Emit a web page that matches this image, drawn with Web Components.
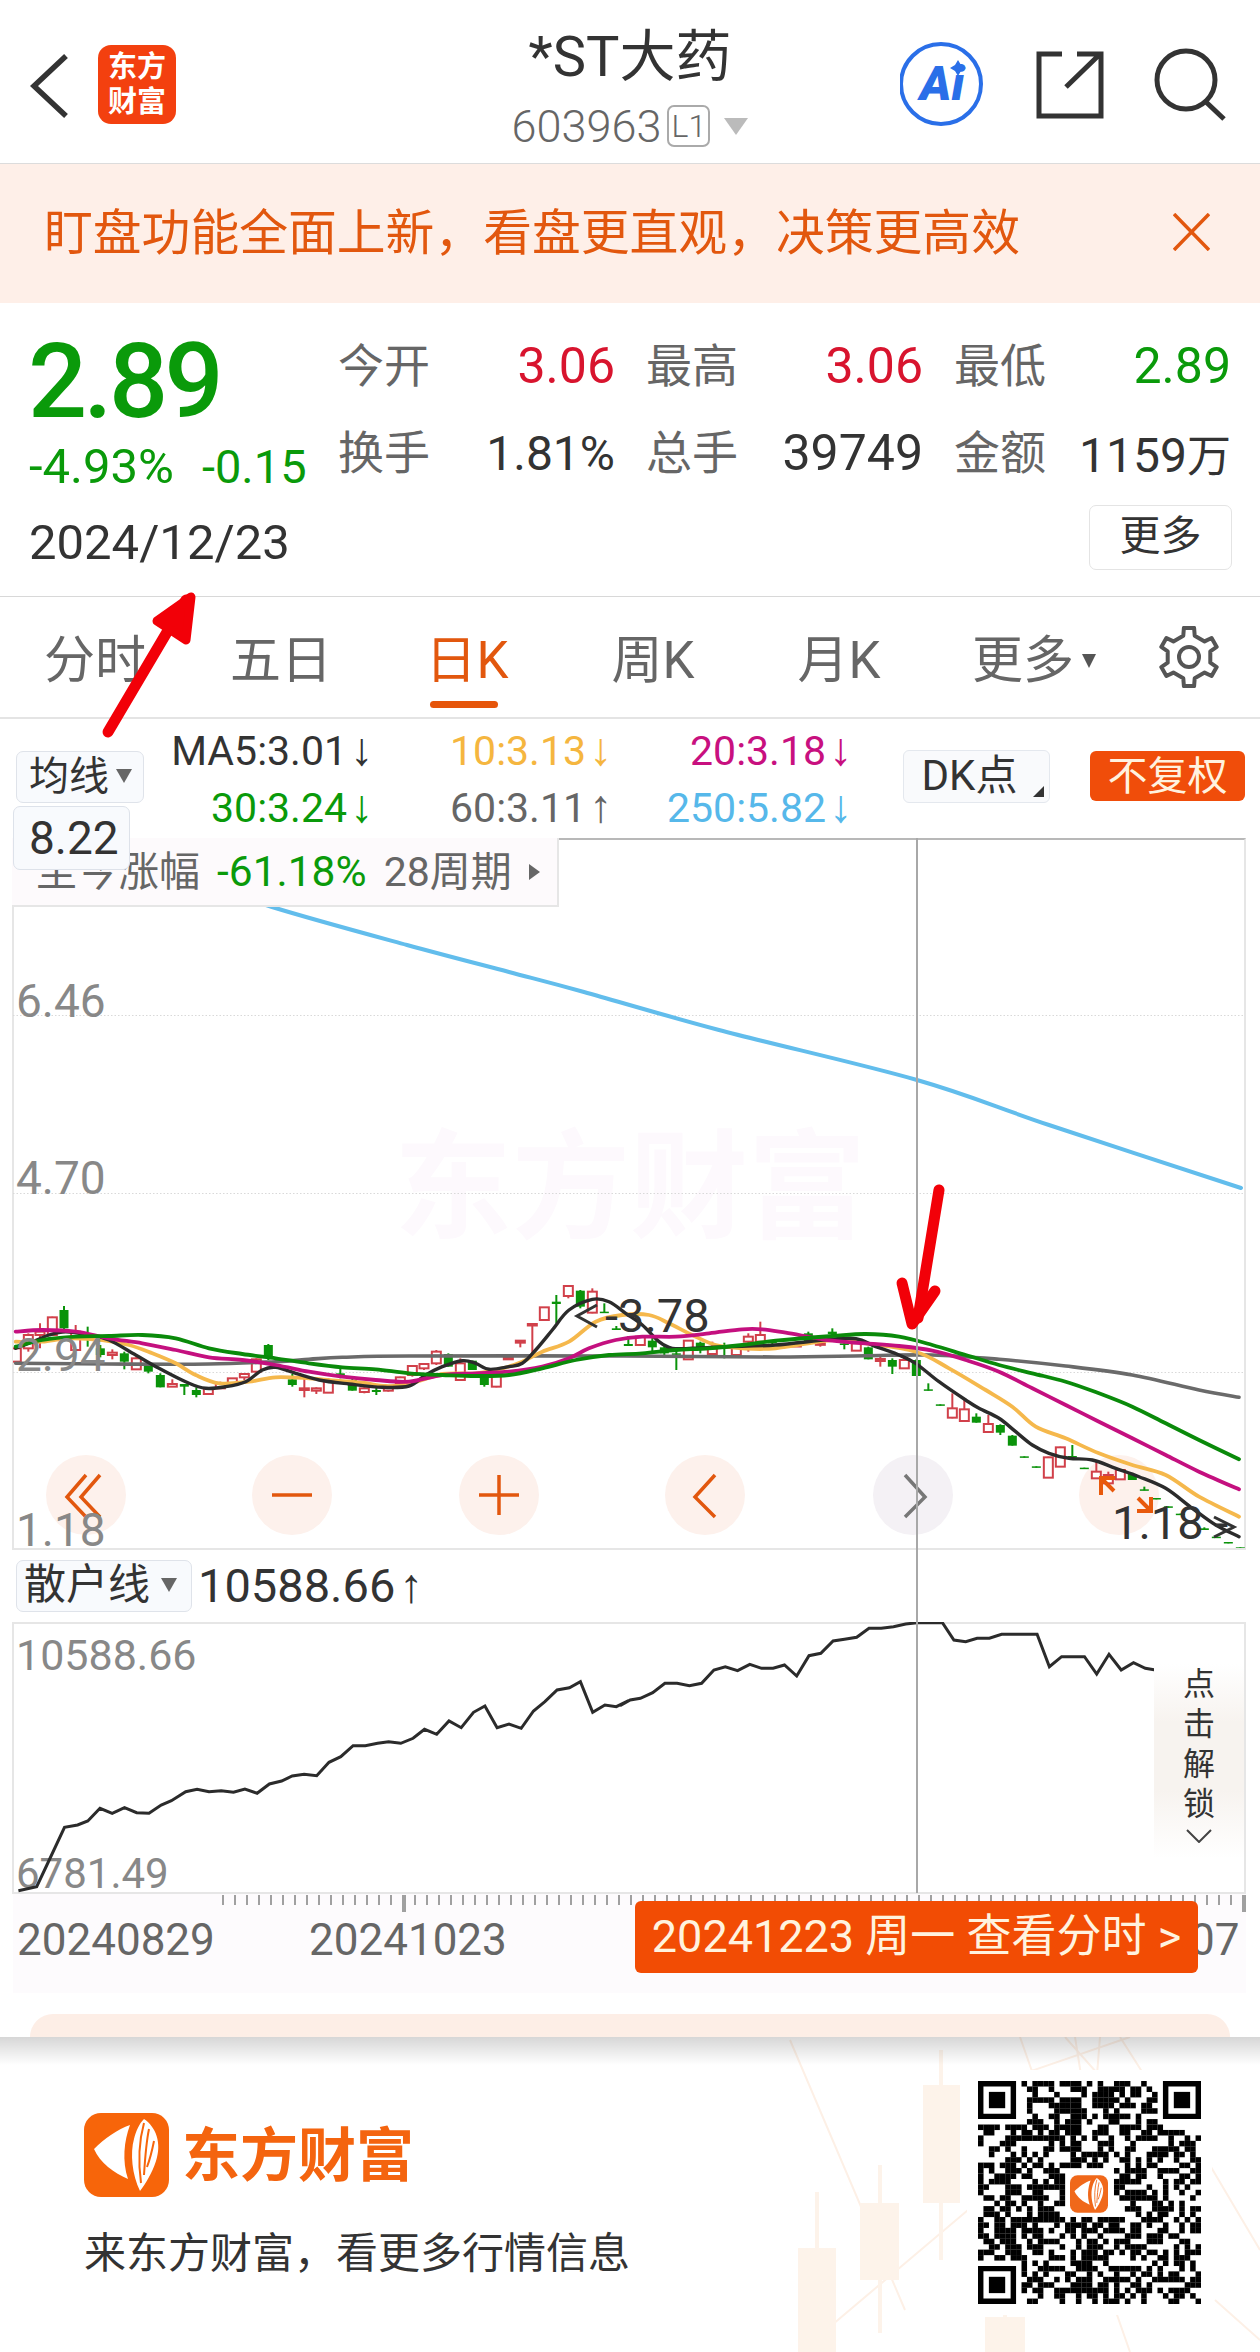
<!DOCTYPE html>
<html lang="zh"><head><meta charset="utf-8"><title>*ST大药</title>
<style>
html,body{margin:0;padding:0;background:#fff}
body{width:1260px;height:2352px;overflow:hidden;position:relative;display:flex;flex-direction:column;font-family:Roboto,"Noto Sans CJK SC",sans-serif;color:#333}
</style></head><body>
<app-header></app-header>
<notice-banner>盯盘功能全面上新，看盘更直观，决策更高效</notice-banner>
<quote-panel></quote-panel>
<period-tabs></period-tabs>
<ma-legend></ma-legend>
<kline-chart></kline-chart>
<sub-header></sub-header>
<sub-chart></sub-chart>
<time-axis></time-axis>
<peach-card></peach-card>
<app-footer></app-footer>
<over-marks></over-marks>
<script>
const FONT='Roboto,"Noto Sans CJK SC",sans-serif';
class Base extends HTMLElement{
  connectedCallback(){ if(!this.shadowRoot){this.attachShadow({mode:'open'}).innerHTML=this.html();} }
}
function wing(w,h,bg){return `<svg width="${w}" height="${h}" viewBox="0 0 85 84" style="display:block"><rect width="85" height="84" rx="17" fill="${bg}"/>
<path d="M10 36C20 26 34 16 46 12C40 28 38 48 44 66C30 60 16 50 10 36Z" fill="#fff"/>
<path d="M60 6C72 14 78 30 72 48C68 60 62 70 56 78C48 62 46 40 50 26C52 18 55 11 60 6Z" fill="#fff"/>
<path d="M60 10C55 28 54 48 57 70M65 16C62 30 61 46 60 62M70 28C68 38 66 46 63 54" stroke="${bg}" stroke-width="2" fill="none"/></svg>`}

customElements.define('app-header',class extends Base{html(){return `<style>
:host{display:grid;grid-template-columns:1fr auto 1fr;height:163px;border-bottom:1px solid #dcdcdc;box-sizing:content-box;flex:none;font-family:${FONT}}
.l{display:flex;align-items:flex-start;padding:45px 0 0 30px}
.logo{margin-left:28px;width:78px;height:79px;border-radius:13px;background:#f3400f;color:#fff;font-weight:700;font-size:29px;line-height:35px;text-align:center;padding-top:5px;box-sizing:border-box;letter-spacing:0}
.c{text-align:center;padding-top:26px}
.t{font-size:56px;line-height:62px;color:#333}
.s{display:flex;align-items:center;justify-content:center;height:52px;margin-top:12px;color:#666;font-size:45px;font-weight:300}
.b{font-size:32px;line-height:38px;border:2px solid #aaa;border-radius:7px;width:43px;height:42px;box-sizing:border-box;text-align:center;margin:0 14px 0 6px}
.tri{width:0;height:0;border:12px solid transparent;border-top:17px solid #bbb;border-bottom:0}
.r{position:relative}
.r svg{position:absolute;right:0;top:0}
.ai{position:absolute;right:278px;top:44px;width:80px;text-align:center;color:#2a6fe8;font-weight:900;font-style:italic;font-size:48px;line-height:80px}
</style>
<div class="l"><svg width="40" height="66" viewBox="0 0 40 66" style="margin-top:8px"><path d="M36 3L4 33L36 63" fill="none" stroke="#333" stroke-width="5.5"/></svg><div class="logo">东方<br>财富</div></div>
<div class="c"><div class="t">*ST大药</div><div class="s"><span>603963</span><span class="b">L1</span><span class="tri"></span></div></div>
<div class="r"><svg width="360" height="163" viewBox="900 0 360 163">
<circle cx="941" cy="84" r="40" fill="#fff" stroke="#2a6fe8" stroke-width="4"/>
<path d="M1062 54H1039V116H1101V68M1066 87L1098 56M1077 54H1101V68" fill="none" stroke="#333" stroke-width="5"/>
<circle cx="1186" cy="80" r="29" fill="none" stroke="#333" stroke-width="5"/><path d="M1206 102L1224 119" stroke="#333" stroke-width="5"/>
</svg><span class="ai">Ai</span></div>`}});

customElements.define('notice-banner',class extends Base{html(){return `<style>
:host{display:flex;align-items:center;justify-content:space-between;height:139px;flex:none;background:#feefe8;padding:0 50px 0 44px;color:#e2570e;font:400 48.8px/1 ${FONT}}
span{margin-top:1px}
svg{display:block;margin-top:-3px}
</style><span><slot></slot></span><svg width="37" height="38" viewBox="0 0 37 38"><path d="M1 1L36 37M36 1L1 37" stroke="#e2570e" stroke-width="3.5" fill="none"/></svg>`}});

customElements.define('quote-panel',class extends Base{html(){
 const G='#0a9a0a',R='#d8142e',K='#333';
 const cell=(l,v,c,f)=>`<div class="cell"><span class="lb">${l}</span><span class="v" style="color:${c}${f?';font-size:'+f+'px':''}">${v}</span></div>`;
 return `<style>
:host{display:grid;grid-template-columns:308px 1fr;height:294px;flex:none;padding-left:30px;box-sizing:border-box;border-bottom:1px solid #d8d8d8;font-family:${FONT}}
.p{font-size:104px;line-height:104px;font-weight:500;color:${G};margin-top:27px;letter-spacing:-3.5px;margin-left:-2px}
.d{display:flex;gap:28px;color:${G};font-size:47px;line-height:54px;font-weight:400;margin-top:6px;white-space:nowrap;margin-left:-1px}
.d .pc{font-size:49px}
.dt{font-size:49px;line-height:56px;font-weight:400;color:#333;margin-top:21px;white-space:nowrap;margin-left:-1px}
.g{display:grid;grid-template-columns:277px 277px 277px;column-gap:31px;row-gap:29px;margin-top:34px}
.cell{display:flex;justify-content:space-between;align-items:center;height:58px}
.lb{color:#666;font-size:46px;position:relative;top:-4px}
.v{font-size:50px;font-weight:400;white-space:nowrap}
.v small{font-size:44px}
.m{position:absolute;right:28px;top:505px;width:143px;height:65px;box-sizing:border-box;border:1px solid #e4e4e4;border-radius:7px;text-align:center;font-size:41px;line-height:61px;color:#333;background:#fff}
</style>
<div><div class="p">2.89</div><div class="d"><span class="pc">-4.93%</span><span>-0.15</span></div><div class="dt">2024/12/23</div></div>
<div><div class="g">${cell('今开','3.06',R)}${cell('最高','3.06',R)}${cell('最低','2.89',G)}${cell('换手','1.81%',K,48)}${cell('总手','39749',K)}${cell('金额','1159<small>万</small>',K,48)}</div></div>
<div class="m">更多</div>`}});

customElements.define('period-tabs',class extends Base{html(){
 let pts=[];for(let k=0;k<6;k++){const a=k*60-90;[[-15,22],[-10,29.5],[10,29.5],[15,22]].forEach(([d,r])=>{const t=(a+d)*Math.PI/180;pts.push((30+r*Math.cos(t)).toFixed(1)+','+(31+r*Math.sin(t)).toFixed(1))})}
 return `<style>
:host{display:flex;align-items:center;height:122px;flex:none;border-bottom:2px solid #e4e4e4;box-sizing:border-box;padding-left:2px;font:400 51px/1 ${FONT};color:#666}
.t{width:186px;text-align:center;position:relative;height:120px;line-height:127px;display:block;white-space:nowrap}
.on{color:#e2570e}
.on::after{content:"";position:absolute;left:56px;width:68px;height:7px;top:104px;background:#e6550a;border-radius:4px}
.tri{display:inline-block;width:0;height:0;border:7px solid transparent;border-top:14px solid #555;border-bottom:0;margin-left:8px;vertical-align:10px}
svg{margin-left:81px;flex:none;margin-top:-1px}
</style>
<span class="t">分时</span><span class="t">五日</span><span class="t on">日K</span><span class="t">周K</span><span class="t">月K</span><span class="t" style="width:146px;text-align:left;padding-left:40px;box-sizing:border-box">更多<i class="tri"></i></span>
<svg width="60" height="62" viewBox="0 0 60 62"><polygon points="${pts.join(' ')}" fill="none" stroke="#555" stroke-width="4" stroke-linejoin="round"/><circle cx="30" cy="31" r="10" fill="none" stroke="#555" stroke-width="4"/></svg>`}});

customElements.define('ma-legend',class extends Base{html(){
 const it=(t,c,u)=>`<span style="color:${c}">${t}<i>${u?'↑':'↓'}</i></span>`;
 return `<style>
:host{display:flex;align-items:flex-start;height:119px;flex:none;padding-left:16px;box-sizing:border-box;font:400 41px/57px ${FONT}}
.bx{margin-top:32px;width:128px;height:52px;box-sizing:border-box;border:1px solid #dfe3ea;border-radius:7px;background:#f8fafd;color:#333;font-size:40px;line-height:50px;padding-left:12px;white-space:nowrap}
.tr{display:inline-block;width:0;height:0;border:8px solid transparent;border-top:14px solid #666;border-bottom:0;margin-left:7px;vertical-align:7px}
.g{display:grid;grid-template-columns:229px 239px 240px;grid-auto-rows:57px;margin-top:4px;justify-items:end;font-weight:400;white-space:nowrap}
i{font:400 46px/0 "Liberation Sans",sans-serif;margin-left:3px;font-style:normal}
.dk{margin:31px 0 0 51px;width:147px;height:53px;box-sizing:border-box;border:1px solid #e4e8ee;border-radius:6px;background:#f9fafc;font-size:42px;line-height:50px;text-align:center;color:#333;position:relative;padding-right:14px}
.dk::after{content:"";position:absolute;right:5px;bottom:5px;border-left:11px solid transparent;border-bottom:11px solid #333}
.fq{margin:32px 0 0 40px;width:155px;height:50px;border-radius:6px;background:#f04d0a;color:#fff2df;font-size:40px;line-height:52px;text-align:center}
</style>
<div class="bx">均线<span class="tr"></span></div>
<div class="g">${it('MA5:3.01','#333')}${it('10:3.13','#f5b63f')}${it('20:3.18','#c8107f')}${it('30:3.24','#0a9a0a')}${it('60:3.11','#666',1)}${it('250:5.82','#56b8ea')}</div>
<div class="dk">DK点</div><div class="fq">不复权</div>`}});

function smooth(p){let d=`M${p[0][0].toFixed(1)} ${p[0][1].toFixed(1)}`;for(let i=0;i<p.length-1;i++){const a=p[i-1]||p[i],b=p[i],c=p[i+1],e=p[i+2]||c;d+=`C${(b[0]+(c[0]-a[0])/6).toFixed(1)} ${(b[1]+(c[1]-a[1])/6).toFixed(1)} ${(c[0]-(e[0]-b[0])/6).toFixed(1)} ${(c[1]-(e[1]-b[1])/6).toFixed(1)} ${c[0].toFixed(1)} ${c[1].toFixed(1)}`}return d}
const z9=a=>a.map(([x,y])=>[10+x/3,1280+y/3]),z10=a=>a.map(([x,y])=>[410+x/3,1270+y/3]),z11=a=>a.map(([x,y])=>[800+x/3,1310+y/3]);
const MA={
 gray:[...z9([[20,250],[300,252],[600,252],[800,245],[900,238],[1000,232],[1200,228]]),...z10([[600,258],[1100,261]]),...z11([[200,137],[400,135],[600,148],[800,168],[1000,195],[1200,240],[1320,262]])],
 orange:[...z9([[20,185],[100,185],[180,175],[280,180],[360,195],[430,220],[500,250],[560,285],[630,310],[720,305],[800,292],[900,295],[980,302],[1060,308],[1130,318],[1200,312]]),...z10([[100,312],[200,310],[280,295],[340,275],[400,245],[480,215],[560,155],[640,135],[720,135],[780,160],[850,195],[920,225],[1000,235],[1100,235]]),...z11([[100,90],[200,100],[350,125],[450,175],[560,240],[640,290],[710,350],[800,385],[900,430],[1000,465],[1100,495],[1200,560],[1320,620]])],
 black:[...z9([[20,205],[60,190],[120,165],[170,155],[240,165],[300,180],[380,225],[450,265],[540,310],[590,325],[650,320],[710,305],[760,270],[800,262],[860,280],[930,300],[1020,312],[1120,322],[1200,318]]),...z10([[50,315],[100,290],[160,272],[200,280],[240,298],[300,290],[340,280],[380,240],[430,180],[480,120],[550,88],[600,95],[650,130],[700,165],[750,215],[790,235],[850,235],[950,230],[1100,225]]),...z11([[150,85],[230,110],[300,135],[350,160],[420,215],[500,270],[540,295],[600,325],[650,365],[700,405],[750,430],[810,445],[880,450],[950,475],[1020,500],[1100,535],[1180,595],[1250,645],[1320,680]])],
 mag:[...z9([[20,155],[100,150],[200,155],[300,175],[400,190],[500,210],[600,232],[700,240],[800,255],[900,275],[1000,290],[1100,300],[1200,305]]),...z10([[100,315],[200,310],[300,305],[400,290],[480,265],[540,235],[620,210],[700,200],[800,200],[900,190],[1000,178],[1060,178],[1130,188]]),...z11([[100,92],[200,100],[300,108],[400,122],[500,150],[600,185],[700,235],[800,285],[900,335],[1000,385],[1100,435],[1200,485],[1320,538]])],
 green:[...z9([[20,200],[100,180],[200,170],[300,168],[400,165],[500,175],[600,205],[700,222],[800,235],[900,250],[1000,262],[1100,268],[1200,280]]),...z10([[100,315],[200,318],[300,315],[400,295],[500,270],[600,255],[700,250],[800,240],[900,235],[1000,225],[1100,212]]),...z11([[100,78],[200,72],[300,80],[400,105],[500,135],[600,165],[700,190],[800,215],[900,250],[1000,290],[1100,340],[1200,390],[1320,448]])]
};
const C9=`22 205 205 245 250 r,58 160 165 205 215 r,93 130 155 165 205 r,130 110 112 165 165 r,165 78 90 145 155 g,200 135 155 210 210 r,236 140 160 170 200 g,274 195 205 225 232 g,310 208 218 225 238 r,346 215 220 245 268 g,382 230 235 268 268 r,418 250 255 275 280 g,454 280 285 322 322 g,490 298 312 320 320 r,526 312 312 320 345 g,562 322 330 345 352 g,598 325 325 342 342 r,634 305 310 325 325 r,670 295 295 310 310 r,706 282 282 292 300 r,742 235 238 275 280 r,778 192 195 230 240 g,850 282 298 315 320 g,886 290 325 330 352 r,922 322 325 332 342 r,958 295 300 338 338 r,994 265 280 285 295 g,1030 295 300 332 332 g,1066 322 325 336 340 r,1102 322 330 336 345 g,1138 318 320 332 335 r,1174 290 292 310 310 r`;
const C10=`10 285 288 315 320 r,45 280 282 295 300 r,82 240 245 280 285 r,118 250 252 290 290 g,154 265 280 330 332 r,190 272 272 300 300 g,226 318 322 345 350 g,262 305 308 350 352 r,298 255 262 268 268 r,334 210 212 218 232 r,370 162 162 165 255 r,406 112 112 150 150 r,442 75 95 102 160 g,478 48 48 78 85 r,514 60 62 110 115 g,550 55 65 128 130 r,586 100 125 128 128 g,622 168 175 180 180 g,658 198 222 228 228 g,694 195 200 225 225 r,730 200 212 232 245 g,766 228 232 250 255 g,802 235 250 252 300 g,838 210 212 268 270 r,874 215 218 240 250 g,910 215 235 252 255 r,946 218 232 236 265 g,982 228 230 255 258 r,1018 190 200 215 245 r,1054 155 195 215 215 r,1090 210 215 220 240 g,1126 220 225 230 235 r,1162 215 225 228 228 r,1198 185 190 215 215 g`;
const C11=`64 90 100 102 110 r,100 55 65 72 78 g,136 95 100 105 118 g,172 85 100 122 122 r,208 110 112 148 148 g,244 140 147 153 170 r,280 145 150 170 192 g,316 135 150 175 175 r,352 148 150 198 198 g,388 220 238 242 242 g,424 283 283 287 287 g,460 250 295 323 325 r,496 270 298 333 333 r,532 310 320 338 338 g,568 315 342 366 366 r,604 343 345 368 375 g,640 375 377 407 407 g,676 439 439 443 443 g,712 469 469 473 473 g,748 440 442 503 503 r,784 410 412 470 470 r,820 405 438 441 441 g,856 473 473 477 477 g,892 450 485 505 505 r,928 485 495 520 520 r,964 478 480 508 508 r,1000 490 492 510 510 g,1036 530 538 541 541 g,1072 564 564 568 568 g,1108 589 589 593 593 g,1144 611 611 615 615 g,1180 636 636 640 640 g,1216 652 655 660 660 g,1252 678 680 683 683 g,1288 696 696 700 700 g,1324 712 712 715 715 g`;
function candles(s,ox,oy){return s.split(',').map(r=>{const a=r.split(' '),[x,wt,bt,bb,wb]=a.slice(0,5).map(Number),c=a[5];const X=(ox+x/3),W=oy+wt/3,T=oy+bt/3,B=oy+bb/3,Y=oy+wb/3;
 const col=c==='r'?'#d1404a':'#0a930a';
 let o=`<path d="M${X} ${W}V${Y}" stroke="${col}" stroke-width="2"/>`;
 o+=c==='r'?`<rect x="${X-4.5}" y="${T}" width="9" height="${Math.max(B-T,1.5)}" fill="#fff" stroke="${col}" stroke-width="2"/>`:`<rect x="${X-4.5}" y="${T}" width="9" height="${Math.max(B-T,1.5)}" fill="${col}"/>`;return o}).join('')}

customElements.define('kline-chart',class extends Base{html(){
 const btns=['M0 -20L-19 2L0 22M14 -20L-5 2L14 22','M-20 0H20','M-20 0H20M0 -20V20','M10 -20L-10 2L10 22','M-8 -20L12 2L-8 22',''];
 const cx=[87,293,500,706,914,1120];
 const b=btns.map((d,i)=>`<circle cx="${cx[i]}" cy="1495" r="40" fill="${i==4?'#f4f1f5':'#fdf1ec'}"/>${d?`<path transform="translate(${cx[i]} 1495)" d="${d}" fill="none" stroke="${i==4?'#777':'#e2570e'}" stroke-width="3.5"/>`:''}`).join('');
 const ln=(p,c,w)=>`<path d="${smooth(p)}" fill="none" stroke="${c}" stroke-width="${w||3}" stroke-linejoin="round" stroke-linecap="round"/>`;
 const blue=[[180,875],[273,907],[408,945],[510,972],[585,992],[720,1030],[918,1080],[1050,1125],[1242,1188]];
 return `<style>
:host{display:block;position:relative;height:712px;flex:none;margin:0 14px 0 12px;box-sizing:border-box;border:solid #e6e6e6;border-width:0 2px 2px 2px;border-top:2px solid #b8b8b8;font-family:${FONT}}
svg{position:absolute;left:-2px;top:-2px;overflow:visible}
.w{position:absolute;left:380px;top:284px;font-size:118px;font-weight:700;color:#fdf9fd;white-space:nowrap;line-height:130px}
.y{position:absolute;left:2px;font-size:46px;line-height:50px;color:#888;font-weight:400}
.sm{position:absolute;left:-2px;top:-2px;width:547px;height:69px;box-sizing:border-box;background:#fdfafc;border:solid #e6e6e6;border-width:0 2px 2px 0;font-size:41px;line-height:64px;color:#666;padding-left:24px;white-space:nowrap;display:flex;align-items:center}
.sm b{font-weight:400;color:#0a9a0a;margin:0 17px 0 17px;font-size:42.5px}
.sm i{display:inline-block;border:8px solid transparent;border-left:11px solid #666;border-right:0;margin-left:17px}
.px{position:absolute;left:-1px;top:-34px;width:117px;height:64px;box-sizing:border-box;background:#f8fafd;border:1px solid #dde2ea;border-radius:7px;font-size:46px;line-height:62px;font-weight:400;color:#333;padding-left:15px}
.t{position:absolute;font-size:47px;line-height:50px;color:#333;font-weight:400;white-space:nowrap}
</style>
<div class="w">东方财富</div>
<svg width="1233" height="712" viewBox="13 838 1233 712">
<defs><clipPath id="c"><rect x="14" y="838" width="1232" height="710"/></clipPath></defs>
<g stroke="#d9d9d9" stroke-width="1" stroke-dasharray="1.5 2"><path d="M14 1015.5H1246M14 1193.5H1246M14 1372.5H1246"/></g>
<g clip-path="url(#c)">
${b}
${ln(blue,'#62bdec',4)}
${candles(C9,10,1280)}${candles(C10,410,1270)}${candles(C11,800,1310)}
${ln(MA.gray,'#6a6a6a',3.6)}${ln(MA.orange,'#f5b84c',3.8)}${ln(MA.black,'#2b2b2b',3.4)}${ln(MA.mag,'#c4107f',3.8)}${ln(MA.green,'#0a8a0a',3.8)}
<path d="M598 1305L578 1316L598 1327M1215 1517L1235 1527L1215 1537" fill="none" stroke="#333" stroke-width="3"/>
<path d="M1102 1495V1478H1116M1102 1478L1115 1491M1138 1511H1152V1497M1152 1511L1139 1498" fill="none" stroke="#e8590c" stroke-width="4" />
</g></svg>
<div class="y" style="top:136px">6.46</div><div class="y" style="top:313px">4.70</div><div class="y" style="top:490px">2.94</div><div class="y" style="top:665px">1.18</div>
<div class="t" style="left:591px;top:451px">-3.78</div>
<div class="t" style="left:1098px;top:658px">1.18 -</div>
<div class="sm">至今涨幅<b>-61.18%</b>28周期<i></i></div>
<div class="px">8.22</div>`}});

customElements.define('sub-header',class extends Base{html(){return `<style>
:host{display:flex;align-items:flex-start;height:72px;flex:none;padding:10px 0 0 16px;box-sizing:border-box;font:400 47px/52px ${FONT};color:#333}
.b{width:176px;height:52px;box-sizing:border-box;border:1px solid #dfe3ea;border-radius:7px;background:#f8fafd;font-size:42px;line-height:48px;padding-left:7px;white-space:nowrap}
.tr{display:inline-block;width:0;height:0;border:8px solid transparent;border-top:14px solid #666;border-bottom:0;margin-left:11px;vertical-align:7px}
.v{margin-left:6px;font-weight:400;white-space:nowrap}
i{font:400 48px/0 "Liberation Sans",sans-serif;margin-left:4px;font-style:normal}
</style><div class="b">散户线<span class="tr"></span></div><div class="v">10588.66<i>↑</i></div>`}});

customElements.define('sub-chart',class extends Base{html(){
 const a=[[45,1052],[90,1040],[115,975],[158,862],[190,855],[215,843],[245,805],[275,820],[305,803],[335,818],[365,820],[395,795],[420,782],[455,755],[483,748],[512,755],[542,752],[572,757],[600,747],[630,760],[660,732],[690,723],[716,708],[745,703],[776,707],[806,667],[835,650],[865,617],[895,617],[925,610],[952,605],[982,610],[1012,595],[1040,568],[1070,583],[1100,543],[1130,563],[1160,517],[1188,498],[1218,563],[1247,552],[1277,565],[1307,513],[1335,485],[1365,450],[1395,443],[1422,425],[1452,517],[1482,495],[1510,500],[1540,482]].map(([x,y])=>[x/2.45,1540+y/3]);
 const b=[[0,497],[25,480],[50,475],[80,458],[110,430],[140,430],[170,437],[200,430],[230,390],[258,380],[288,392],[318,373],[347,385],[375,385],[403,375],[433,408],[463,347],[492,340],[522,303],[550,298],[580,292],[610,265],[640,265],[670,260],[700,252],[728,248],[790,248],[818,300],[847,305],[875,295],[905,295],[935,283],[1022,283],[1052,380],[1082,350],[1138,350],[1168,402],[1198,343],[1228,390],[1258,368],[1287,385],[1312,390]].map(([x,y])=>[620+x/2.45,1540+y/3]);
 const d=[...a,...b].map(([x,y],i)=>(i?'L':'M')+x.toFixed(1)+' '+y.toFixed(1)).join('');
 return `<style>
:host{display:block;position:relative;height:272px;flex:none;margin:0 14px 0 12px;box-sizing:border-box;border:2px solid #e6e6e6;font-family:${FONT}}
svg{position:absolute;left:-2px;top:-2px}
.y{position:absolute;left:2px;font-size:43px;line-height:50px;color:#888;font-weight:400}
.lock{position:absolute;right:0;top:40px;width:90px;height:194px;background:linear-gradient(#fff,#f7f3ef 30%,#f7f3ef 65%,#fff);text-align:center;font-size:32px;line-height:40px;color:#333}
.lock div{height:40px}
.lock svg{position:static;display:block;margin:5px auto 0}
</style>
<div class="y" style="top:6px">10588.66</div><div class="y" style="top:230px;line-height:40px;font-size:42px">6781.49</div>
<svg width="1234" height="272" viewBox="12 1622 1234 272"><path d="${d}" fill="none" stroke="#2b2b2b" stroke-width="3" stroke-linejoin="miter"/></svg>
<div class="lock"><div>点</div><div>击</div><div>解</div><div>锁</div><svg width="28" height="14" viewBox="0 0 28 14"><path d="M2 1L14 13L26 1" fill="none" stroke="#444" stroke-width="2"/></svg></div>`}});

customElements.define('time-axis',class extends Base{html(){
 let t='';for(let x=222;x<=1242;x+=12){const big=(x===402||x===1242);t+=`<rect x="${x-13}" y="1" width="${big?4:2}" height="${big?17:10}" fill="#a0a0a0"/>`}
 return `<style>
:host{display:block;position:relative;height:99px;flex:none;margin:0 14px 0 13px;background:#fdfbfd;font-family:${FONT};font-size:44px;color:#666;font-weight:400}
svg{position:absolute;left:0;top:0}
span{position:absolute;top:21px;line-height:50px;white-space:nowrap}
.o{position:absolute;left:622px;top:7px;width:563px;height:72px;background:#f24c04;border-radius:6px;color:#fff3df;font-size:45px;line-height:72px;text-align:center;font-weight:400;white-space:nowrap}
</style>
<svg width="1233" height="30">${t}</svg>
<span style="left:4px">20240829</span><span style="left:296px">20241023</span><span style="left:1177px">07</span>
<div class="o">20241223 周一 查看分时 &gt;</div>`}});

customElements.define('peach-card',class extends Base{html(){return `<style>
:host{display:block;height:23px;flex:none;margin:21px 30px 0 30px;background:#fdeee6;border-radius:30px 30px 0 0}
</style>`}});

customElements.define('app-footer',class extends Base{html(){
 let s=12345;const rnd=()=>(s=(s*1103515245+12345)&0x7fffffff)/0x7fffffff;
 const n=41,m=223/n;let q='';
 const fin=(x,y)=>x<8&&y<8||x>=n-8&&y<8||x<8&&y>=n-8;
 for(let y=0;y<n;y++)for(let x=0;x<n;x++){ if(fin(x,y))continue; if(x>=16&&x<=24&&y>=16&&y<=24)continue; if(rnd()>.5||((x+y)%5==0&&rnd()>.5))q+=`<rect x="${(x*m).toFixed(2)}" y="${(y*m).toFixed(2)}" width="${(m+.1).toFixed(2)}" height="${(m+.1).toFixed(2)}"/>`}
 const fp=(x,y)=>`<path fill-rule="evenodd" d="M${x} ${y}h${7*m}v${7*m}h${-7*m}zM${x+m} ${y+m}v${5*m}h${5*m}v${-5*m}z"/><rect x="${x+2*m}" y="${y+2*m}" width="${3*m}" height="${3*m}"/>`;
 return `<style>
:host{display:block;position:relative;height:315px;flex:none;background:#fff;overflow:hidden;font-family:${FONT}}
.bg{position:absolute;left:0;top:0}
.sh{position:absolute;left:0;right:0;top:0;height:28px;background:linear-gradient(rgba(0,0,0,.16),rgba(0,0,0,0))}
.lg{position:absolute;left:84px;top:74px;display:flex;align-items:center}
.lg b{margin-left:13px;font-size:58px;line-height:84px;font-weight:700;color:#f4640f;white-space:nowrap;margin-top:3px}
.tx{position:absolute;left:84px;top:192px;font-size:42px;line-height:50px;color:#333;white-space:nowrap}
.qr{position:absolute;left:967px;top:33px;width:245px;height:245px;background:#fff;display:flex;align-items:center;justify-content:center}
.qr svg{display:block}
.ql{position:absolute;left:103px;top:105px}
</style>
<svg class="bg" width="1260" height="315" viewBox="0 2037 1260 315" fill="none">
<g stroke="#fdf0e6" stroke-width="2"><path d="M790 2040L905 2310M1020 2037L1130 2352M800 2352L1110 2090M1005 2080L1130 2037M1065 2037L1130 2110M1075 2037L1085 2100M1100 2037L1095 2100M1120 2037L1160 2100M1260 2250L1195 2140M1260 2340L1215 2300"/></g>
<g fill="#fdf3ea"><rect x="923" y="2085" width="37" height="118"/><rect x="860" y="2203" width="39" height="77"/><rect x="798" y="2248" width="38" height="104"/><rect x="985" y="2317" width="40" height="35"/></g>
<g stroke="#fdf3ea" stroke-width="4"><path d="M941 2050V2260M880 2165V2333M817 2192V2352M1005 2300V2352"/></g>
</svg>
<div class="sh"></div>
<div class="lg">${wing(85,84,'#f7650a')}<b>东方财富</b></div>
<div class="tx">来东方财富，看更多行情信息</div>
<div class="qr"><svg width="223" height="223" viewBox="0 0 223 223" fill="#000">${q}${fp(0,0)}${fp(223-7*m,0)}${fp(0,223-7*m)}</svg><div class="ql">${wing(38,38,'#f0681a')}</div></div>`}});

customElements.define('over-marks',class extends Base{html(){return `<style>
:host{position:absolute;left:0;top:0;width:1260px;height:2352px;pointer-events:none}
svg{position:absolute;left:0;top:0}
</style><svg width="1260" height="2352" fill="none">
<path d="M917 838V1893" stroke="#a8a8a8" stroke-width="2"/>
<path d="M958 60l3 5 5 3-5 3-3 5-3-5-5-3 5-3z" fill="#2a6fe8"/>
<g stroke="#f20008" stroke-linecap="round" stroke-linejoin="round">
<path d="M108 732L186 600" stroke-width="11"/><path d="M157 621L191 597L186 640Z" stroke-width="9" fill="#f20008"/>
<path d="M939 1190L918 1318" stroke-width="11"/><path d="M902 1283L912 1324L935 1291" stroke-width="11"/>
</g></svg>`}});
</script>
</body></html>
